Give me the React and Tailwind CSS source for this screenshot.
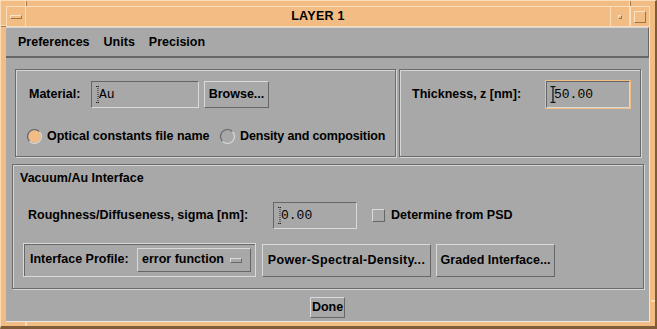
import React from 'react';

// Motif-style "LAYER 1" dialog

const raised = 'border border-t-[#dadada] border-l-[#dadada] border-b-[#666666] border-r-[#666666]';
const sunken = 'border border-t-[#666666] border-l-[#666666] border-b-[#dadada] border-r-[#dadada]';
const etched = 'border border-[#6b6b6b] shadow-[inset_1px_1px_0_#d6d6d6,1px_1px_0_#d6d6d6]';

function Cursor({ dotted }) {
  return (
    <svg width="6" height="17" viewBox="0 0 6 17" className="shrink-0">
      {dotted ? (
        <g stroke="#222" strokeWidth="1" strokeDasharray="1 1">
          <line x1="3" y1="0" x2="3" y2="17" />
          <line x1="1" y1="0.5" x2="5" y2="0.5" />
          <line x1="1" y1="16.5" x2="5" y2="16.5" />
        </g>
      ) : (
        <g stroke="#111" strokeWidth="1.2">
          <line x1="3" y1="0" x2="3" y2="17" />
          <line x1="0.5" y1="0.6" x2="5.5" y2="0.6" />
          <line x1="0.5" y1="16.4" x2="5.5" y2="16.4" />
        </g>
      )}
    </svg>
  );
}

function Radio({ on }) {
  return (
    <svg width="17" height="17" viewBox="0 0 17 17" className="shrink-0">
      {on && <circle cx="8.5" cy="8.5" r="6.2" fill="#f2bd84" />}
      <path d="M3.55 13.45 A7 7 0 0 1 13.45 3.55" fill="none" stroke="#666" strokeWidth="1.2" />
      <path d="M13.45 3.55 A7 7 0 0 1 3.55 13.45" fill="none" stroke="#dadada" strokeWidth="1.2" />
    </svg>
  );
}

function Field({ w, h, value, dotted, className = '' }) {
  return (
    <div className={`${sunken} ${className} flex items-center pl-[3px] bg-[#a8a8a8]`} style={{ width: w, height: h }}>
      <Cursor dotted={dotted} />
      <span className="ml-[-2px] font-['Liberation_Mono',monospace] font-normal text-[13px] leading-none text-black">{value}</span>
    </div>
  );
}

export default function App() {
  return (
    <div className="w-[657px] h-[329px] relative bg-[#f2bd84] border-t border-l border-t-[#fbdcb8] border-l-[#fbdcb8] border-r-2 border-r-[#7d5c36] border-b-[3px] border-b-[#7d5c36] pt-[5px] pl-[5px] pr-[5px] pb-[4px] font-['Liberation_Sans',Arial,sans-serif] font-bold text-black text-[12.5px] leading-none overflow-hidden">
      {/* frame resize marks */}
      <div className="absolute left-[24px] top-0 w-[2px] h-[5px] bg-[#fbdcb8] border-r border-[#a07a50]" />
      <div className="absolute right-[24px] top-0 w-[2px] h-[5px] bg-[#fbdcb8] border-r border-[#a07a50]" />
      <div className="absolute left-0 top-[24px] h-[2px] w-[5px] bg-[#fbdcb8] border-b border-[#a07a50]" />
      <div className="absolute left-[24px] bottom-0 w-[2px] h-[4px] bg-[#fbdcb8]" />
      <div className="absolute right-0 bottom-[24px] h-[2px] w-[4px] bg-[#fbdcb8]" />

      <div className="flex flex-col h-full">
        {/* title bar */}
        <div className="flex h-[21px] shrink-0">
          <div className="w-[20px] border border-[#fbdcb8] flex items-center justify-center">
            <div className="w-[12px] h-[4px] border border-t-[#fde4c6] border-l-[#fde4c6] border-b-[#9c7448] border-r-[#9c7448]" />
          </div>
          <div className="flex-1 border-t border-b border-[#fbdcb8] flex items-center justify-center text-[12.5px] tracking-[0.3px]">
            LAYER 1
          </div>
          <div className="w-[20px] border border-[#fbdcb8] flex items-center justify-center">
            <div className="w-[4px] h-[4px] border border-t-[#fde4c6] border-l-[#fde4c6] border-b-[#9c7448] border-r-[#9c7448]" />
          </div>
          <div className="w-[20px] border border-[#fbdcb8] flex items-center justify-center">
            <div className="w-[12px] h-[12px] border border-t-[#fde4c6] border-l-[#fde4c6] border-b-[#9c7448] border-r-[#9c7448]" />
          </div>
        </div>

        <div className="flex-1 flex flex-col bg-[#a8a8a8] border-r border-b border-[#e8e8e8]">
          {/* menu bar */}
          <div className="h-[31px] shrink-0 flex items-center gap-[14px] pl-[12px] bg-[#a8a8a8] border-t border-t-[#d6d6d6] border-b-2 border-b-[#666666] border-r border-r-[#666666] text-[12.5px]">
            <span>Preferences</span>
            <span>Units</span>
            <span>Precision</span>
          </div>

          {/* row 1 */}
          <div className="flex mt-[11px] ml-[9px] gap-[3px]">
            <div className={`${etched} w-[381px] h-[88px] flex flex-col`}>
              <div className="flex items-center pt-[11px] pl-[13px]">
                <span className="w-[62px]">Material:</span>
                <Field w={108} h={27} value="Au" dotted />
                <div className={`${raised} ml-[5px] w-[65px] h-[27px] flex items-center justify-center`}>Browse...</div>
              </div>
              <div className="flex items-center mt-[20px] pl-[10px]">
                <div className="flex items-center w-[193px]">
                  <Radio on />
                  <span className="ml-[4px]">Optical constants file name</span>
                </div>
                <Radio />
                <span className="ml-[4px] tracking-[-0.15px]">Density and composition</span>
              </div>
            </div>
            <div className={`${etched} w-[242px] h-[88px]`}>
              <div className="flex items-center pt-[10px] pl-[12px]">
                <span className="w-[133px]">Thickness, z [nm]:</span>
                <div className="border border-[#f2bd84]">
                  <Field w={84} h={27} value="50.00" />
                </div>
              </div>
            </div>
          </div>

          {/* row 2 */}
          <div className={`${etched} mt-[7px] ml-[6px] w-[632px] h-[125px] flex flex-col`}>
            <div className="pt-[7px] pl-[7px]">Vacuum/Au Interface</div>
            <div className="flex items-center mt-[17px] pl-[15px]">
              <span className="w-[245px]">Roughness/Diffuseness, sigma [nm]:</span>
              <Field w={84} h={27} value="0.00" dotted />
              <div className={`${raised} ml-[15px] w-[13px] h-[13px]`} />
              <span className="ml-[6px]">Determine from PSD</span>
            </div>
            <div className="flex items-start mt-[14px] pl-[10px]">
              <div className="w-[233px] h-[34px] border border-[#dadada] shadow-[inset_1px_1px_0_#666666] flex items-center pl-[6px]">
                <span className="w-[107px]">Interface Profile:</span>
                <div className={`${raised} w-[114px] h-[24px] flex items-center pl-[4px]`}>
                  <span>error function</span>
                  <div className="ml-auto mr-[8px] mt-[2px] w-[12px] h-[5px] border border-t-[#dadada] border-l-[#dadada] border-b-[#666666] border-r-[#666666]" />
                </div>
              </div>
              <div className={`${raised} ml-[6px] mt-[1px] w-[169px] h-[33px] flex items-center justify-center tracking-[0.3px]`}>
                Power-Spectral-Density...
              </div>
              <div className={`${raised} ml-[5px] mt-[1px] w-[119px] h-[33px] flex items-center justify-center`}>Graded Interface...</div>
            </div>
          </div>

          {/* done */}
          <div className="flex justify-center mt-[8px]">
            <div className={`${raised} w-[35px] h-[21px] flex items-center justify-center`}>Done</div>
          </div>
        </div>
      </div>
    </div>
  );
}
